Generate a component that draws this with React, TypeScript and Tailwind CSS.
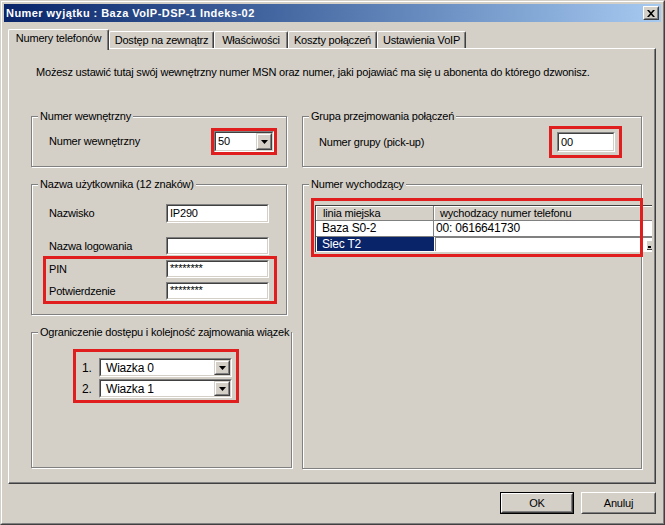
import React from "react";

const FONT = "font-['Liberation_Sans',Arial,sans-serif]";

function Arrow() {
  return (
    <svg width="7" height="4" viewBox="0 0 7 4">
      <path d="M0 0h7L3.5 4z" fill="#000" />
    </svg>
  );
}

function DropBtn() {
  return (
    <div className="h-full w-[16px] shrink-0 border border-t-[#d4d0c8] border-l-[#d4d0c8] border-r-[#404040] border-b-[#404040]">
      <div className="flex h-full items-center justify-center border border-t-white border-l-white border-r-[#808080] border-b-[#808080] bg-[#d4d0c8]">
        <Arrow />
      </div>
    </div>
  );
}

function Sunken({ className = "", children }: { className?: string; children?: React.ReactNode }) {
  return (
    <div className={`border border-t-[#808080] border-l-[#808080] border-r-white border-b-white ${className}`}>
      <div className="flex h-full items-center overflow-hidden border border-t-[#404040] border-l-[#404040] border-r-[#d4d0c8] border-b-[#d4d0c8] bg-white">
        {children}
      </div>
    </div>
  );
}

function Combo({ value, className, pad }: { value: string; className: string; pad: string }) {
  return (
    <Sunken className={className}>
      <span className={`flex-1 ${pad}`}>{value}</span>
      <DropBtn />
    </Sunken>
  );
}

function Group({ title, className = "", children }: { title: string; className?: string; children?: React.ReactNode }) {
  return (
    <fieldset className={`border border-[#808080] shadow-[inset_1px_1px_0_#fff,1px_1px_0_#fff] ${className}`}>
      <legend className="ml-[6px] whitespace-nowrap bg-[#d4d0c8] px-[2px] leading-[13px]">{title}</legend>
      {children}
    </fieldset>
  );
}

function Button({ label, isDefault = false }: { label: string; isDefault?: boolean }) {
  const inner = (
    <div className="flex h-full items-center justify-center border border-t-white border-l-white border-r-[#404040] border-b-[#404040]">
      <div className="flex h-full w-full items-center justify-center border border-t-[#d4d0c8] border-l-[#d4d0c8] border-r-[#808080] border-b-[#808080]">
        {label}
      </div>
    </div>
  );
  return isDefault ? (
    <div className="h-[22px] w-[74px] border border-black">{inner}</div>
  ) : (
    <div className="h-[22px] w-[75px]">{inner}</div>
  );
}

const tabs: [string, number][] = [
  ["Numery telefonów", 101],
  ["Dostęp na zewnątrz", 105],
  ["Właściwości", 74],
  ["Koszty połączeń", 89],
  ["Ustawienia VoIP", 89],
];

export default function App() {
  return (
    <div className={`h-[525px] w-[665px] ${FONT} text-[11px] tracking-[-0.2px] text-black border border-t-[#d4d0c8] border-l-[#d4d0c8] border-r-[#404040] border-b-[#404040] bg-[#d4d0c8]`}>
      <div className="flex h-full flex-col border border-t-white border-l-white border-r-[#808080] border-b-[#808080] p-[2px]">
        {/* title bar */}
        <div className="flex h-[18px] shrink-0 items-center justify-between bg-linear-to-r from-[#0a246a] to-[#a6caf0] pl-[2px] pr-[2px]">
          <span className="font-bold leading-[13px] tracking-[0.45px] text-white">Numer wyjątku : Baza VoIP-DSP-1 Indeks-02</span>
          <div className="h-[14px] w-[16px] border border-t-white border-l-white border-r-[#404040] border-b-[#404040]">
            <div className="flex h-full items-center justify-center border border-t-[#d4d0c8] border-l-[#d4d0c8] border-r-[#808080] border-b-[#808080] bg-[#d4d0c8]">
              <svg width="8" height="7" viewBox="0 0 8 7">
                <path d="M0 0h2l2 2.3L6 0h2L5 3.5 8 7H6L4 4.7 2 7H0l3-3.5z" fill="#000" />
              </svg>
            </div>
          </div>
        </div>

        <div className="flex flex-1 flex-col pl-[4px] pr-[5px]">
          {/* tabs */}
          <div className="flex h-[26px] items-end">
            {tabs.map(([t, w], i) =>
              i === 0 ? (
                <div
                  key={t}
                  style={{ width: w }}
                  className="relative z-10 -mb-[2px] flex h-[21px] items-center justify-center rounded-t-[2px] border-l border-t border-r border-l-white border-t-white border-r-[#404040] bg-[#d4d0c8] pb-[3px] shadow-[inset_-1px_0_0_#808080]"
                >
                  {t}
                </div>
              ) : (
                <div
                  key={t}
                  style={{ width: w }}
                  className="flex h-[17px] items-center justify-center rounded-t-[2px] border-l border-t border-r border-l-white border-t-white border-r-[#404040] shadow-[inset_-1px_0_0_#808080]"
                >
                  {t}
                </div>
              )
            )}
          </div>

          {/* panel */}
          <div className="h-[436px] border border-t-white border-l-white border-r-[#404040] border-b-[#404040] pl-[22px] pt-[17px] shadow-[inset_-1px_-1px_0_#808080]">
            <p className="ml-[5px] leading-[13px]">
              Możesz ustawić tutaj swój wewnętrzny numer MSN oraz numer, jaki pojawiać ma się u abonenta do którego dzwonisz.
            </p>

            <div className="mt-[31px] flex gap-[15px]">
              {/* left column */}
              <div className="flex w-[256px] flex-col gap-[11px]">
                <Group title="Numer wewnętrzny" className="h-[57px]">
                  <div className="mt-[5px] flex items-center justify-between pl-[17px] pr-[9px]">
                    <span>Numer wewnętrzny</span>
                    <div className="border-[3px] border-[#e01e1e]">
                      <Combo value="50" className="h-[21px] w-[60px]" pad="pl-[2px]" />
                    </div>
                  </div>
                </Group>

                <Group title="Nazwa użytkownika (12 znaków)" className="h-[137px]">
                  <div className="mt-[13px] flex items-center justify-between pl-[17px] pr-[17px]">
                    <span>Nazwisko</span>
                    <Sunken className="h-[19px] w-[103px]">
                      <span className="pl-[2px]">IP290</span>
                    </Sunken>
                  </div>
                  <div className="mt-[14px] flex items-center justify-between pl-[17px] pr-[17px]">
                    <span>Nazwa logowania</span>
                    <Sunken className="h-[18px] w-[103px]" />
                  </div>
                  <div className="ml-[11px] mt-[1px] flex w-[234px] flex-col gap-[4px] border-[3px] border-[#e01e1e] py-[1px] pl-[3px] pr-[5px]">
                    <div className="flex items-center justify-between">
                      <span>PIN</span>
                      <Sunken className="h-[18px] w-[103px]">
                        <span className="self-start pl-[2px] leading-[12px]">********</span>
                      </Sunken>
                    </div>
                    <div className="flex items-center justify-between">
                      <span>Potwierdzenie</span>
                      <Sunken className="h-[18px] w-[103px]">
                        <span className="self-start pl-[2px] leading-[12px]">********</span>
                      </Sunken>
                    </div>
                  </div>
                </Group>

                <Group title="Ograniczenie dostępu i kolejność zajmowania wiązek" className="h-[142px]">
                  <div className="ml-[41px] mt-[10px] flex w-[166px] flex-col gap-[2px] border-[3px] border-[#e01e1e] pb-[2px] pl-[6px] pr-[4px] pt-[6px]">
                    <div className="flex items-center">
                      <span className="w-[17px] text-[12px]">1.</span>
                      <Combo value="Wiazka 0" className="h-[19px] w-[133px]" pad="pl-[5px] text-[12px]" />
                    </div>
                    <div className="flex items-center">
                      <span className="w-[17px] text-[12px]">2.</span>
                      <Combo value="Wiazka 1" className="h-[19px] w-[133px]" pad="pl-[5px] text-[12px]" />
                    </div>
                  </div>
                </Group>
              </div>

              {/* right column */}
              <div className="flex w-[340px] flex-col gap-[11px]">
                <Group title="Grupa przejmowania połączeń" className="h-[57px]">
                  <div className="mt-[3px] flex items-center justify-between pl-[16px] pr-[19px]">
                    <span className="pt-[1px]">Numer grupy (pick-up)</span>
                    <div className="border-[3px] border-[#e01e1e] pb-[3px] pl-[5px] pr-[4px] pt-[3px]">
                      <Sunken className="h-[20px] w-[58px]">
                        <span className="pl-[2px]">00</span>
                      </Sunken>
                    </div>
                  </div>
                </Group>

                <Group title="Numer wychodzący" className="h-[291px]">
                  <div className="ml-[11px] mt-[10px] h-[53px] w-[326px] pl-[1px] pt-[4px] outline-3 outline-[#e01e1e]">
                    <div className="h-[47px] w-[337px] overflow-hidden border-l border-t border-[#404040] bg-white">
                      <div className="flex h-[15px] border-b border-[#808080] bg-[#d4d0c8] leading-[14px]">
                        <div className="w-[118px] border-r border-[#808080] pl-[7px] shadow-[inset_1px_1px_0_#fff]">linia miejska</div>
                        <div className="flex-1 pl-[6px] shadow-[inset_1px_1px_0_#fff]">wychodzacy numer telefonu</div>
                      </div>
                      <div className="flex h-[16px] border-b border-[#808080] leading-[15px]">
                        <div className="w-[118px] border-r border-[#808080] pl-[6px] text-[12px]">Baza S0-2</div>
                        <div className="flex-1 pl-[2px] text-[12px]">00: 0616641730</div>
                      </div>
                      <div className="flex h-[14px] leading-[14px]">
                        <div className="ml-[1px] w-[117px] bg-[#0a246a] pl-[5px] text-[12px] text-white">Siec T2</div>
                        <div className="ml-[1px] flex flex-1 items-end justify-end border-l border-t border-[#808080] bg-white">
                          <div className="mb-[1px] h-[10px] w-[6px] border-l border-t border-white bg-[#d4d0c8] shadow-[inset_0_-1px_0_#404040]">
                            <div className="ml-[1px] mt-[5px] h-[2px] w-[3px] bg-black" />
                          </div>
                        </div>
                      </div>
                    </div>
                  </div>
                </Group>
              </div>
            </div>
          </div>

          {/* buttons */}
          <div className="flex justify-end gap-[7px] pt-[8px]">
            <Button label="OK" isDefault />
            <Button label="Anuluj" />
          </div>
        </div>
      </div>
    </div>
  );
}
